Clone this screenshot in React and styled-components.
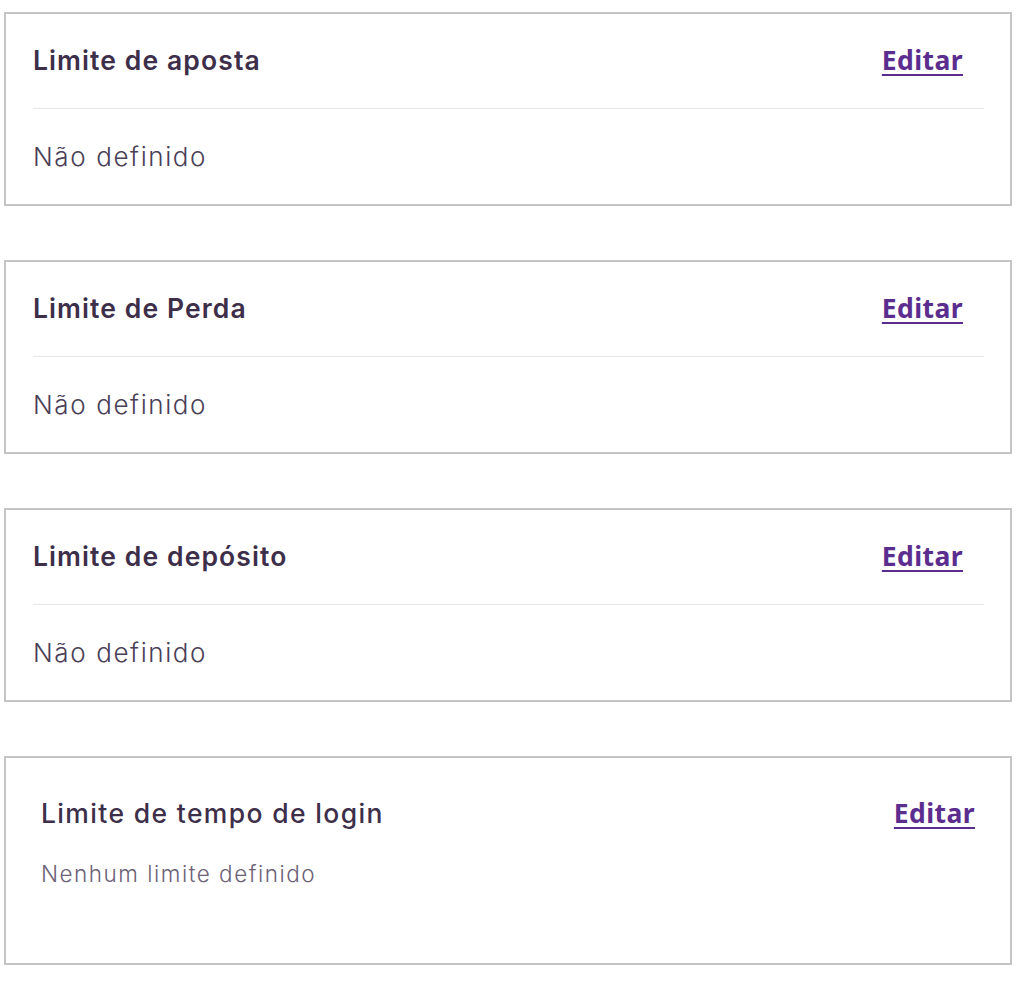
import React from 'react';
import styled, { createGlobalStyle } from 'styled-components';

const GlobalStyle = createGlobalStyle`
  html, body {
    margin: 0;
    padding: 0;
    background: #ffffff;
  }
  body {
    font-family: 'Inter', 'Noto Sans', sans-serif;
    -webkit-font-smoothing: antialiased;
  }
`;

const Page = styled.div`
  display: flex;
  flex-direction: column;
  gap: 54px;
  padding: 12px 12px 20px 4px;
`;

const Card = styled.section`
  border: 2px solid #c4c4c4;
  background: #fff;
`;

const CardHeader = styled.div`
  height: 95px;
  margin: 0 26px 0 27px;
  padding-bottom: 2px;
  display: flex;
  align-items: center;
  justify-content: space-between;
  border-bottom: 1.5px solid #e6e6e6;
  box-sizing: border-box;
  padding-right: 21px;
`;

const Title = styled.h3`
  margin: 0;
  font-size: 26.5px;
  font-weight: ${props => props.light ? 500 : 600};
  color: #3d2e4a;
  letter-spacing: ${props => props.light ? '1.35px' : '1.1px'};
`;

const EditLink = styled.a`
  font-family: 'Noto Sans', 'Open Sans', sans-serif;
  font-size: 26.5px;
  font-weight: 700;
  color: #5b2d8e;
  letter-spacing: 0.4px;
  text-decoration: underline;
  text-underline-offset: 4px;
  text-decoration-thickness: 2px;
  cursor: pointer;
`;

const CardBody = styled.div`
  height: 95px;
  margin: 0 27px;
  display: flex;
  align-items: center;
  font-size: 26px;
  font-weight: 300;
  letter-spacing: 1.6px;
  color: #4a3e56;
`;

const LoginCard = styled(Card)`
  padding: 40px 35px 0 35px;
  height: 209px;
  box-sizing: border-box;
`;

const LoginHeader = styled.div`
  display: flex;
  align-items: center;
  justify-content: space-between;
  height: 30px;
`;

const Note = styled.p`
  margin: 32px 0 0 0;
  font-size: 22.5px;
  font-weight: 300;
  letter-spacing: 1.5px;
  color: #6b6176;
`;

const limits = ['Limite de aposta', 'Limite de Perda', 'Limite de depósito'];

export default function App() {
  return (
    <>
      <GlobalStyle />
      <Page>
        {limits.map(label => (
          <Card key={label}>
            <CardHeader>
              <Title>{label}</Title>
              <EditLink>Editar</EditLink>
            </CardHeader>
            <CardBody>Não definido</CardBody>
          </Card>
        ))}
        <LoginCard>
          <LoginHeader>
            <Title light>Limite de tempo de login</Title>
            <EditLink>Editar</EditLink>
          </LoginHeader>
          <Note>Nenhum limite definido</Note>
        </LoginCard>
      </Page>
    </>
  );
}
